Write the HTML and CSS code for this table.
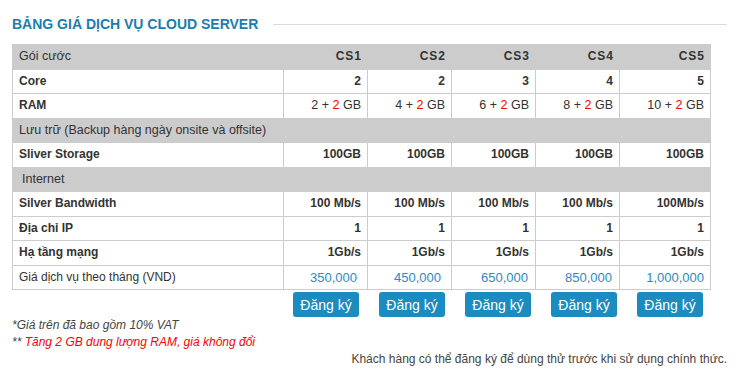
FILE: index.html
```html
<!DOCTYPE html>
<html lang="vi">
<head>
<meta charset="utf-8">
<title>Bảng giá dịch vụ Cloud Server</title>
<link rel="stylesheet" href="styles.css">
</head>
<body>
<div class="page">
  <div class="heading">
    <h2 class="title">BẢNG GIÁ DỊCH VỤ CLOUD SERVER</h2>
    <div class="rule"></div>
  </div>
  <table class="price">
    <colgroup>
      <col class="c-label"><col class="c-plan"><col class="c-plan"><col class="c-plan"><col class="c-plan"><col class="c-last">
    </colgroup>
    <tr class="head">
      <td>Gói cước</td><td class="plan">CS1</td><td class="plan">CS2</td><td class="plan">CS3</td><td class="plan">CS4</td><td class="plan">CS5</td>
    </tr>
    <tr class="b">
      <td>Core</td><td>2</td><td>2</td><td>3</td><td>4</td><td>5</td>
    </tr>
    <tr class="b">
      <td>RAM</td><td class="n">2 + <span class="red">2</span> GB</td><td class="n">4 + <span class="red">2</span> GB</td><td class="n">6 + <span class="red">2</span> GB</td><td class="n">8 + <span class="red">2</span> GB</td><td class="n">10 + <span class="red">2</span> GB</td>
    </tr>
    <tr class="section">
      <td colspan="6">Lưu trữ (Backup hàng ngày onsite và offsite)</td>
    </tr>
    <tr class="b">
      <td>Sliver Storage</td><td>100GB</td><td>100GB</td><td>100GB</td><td>100GB</td><td>100GB</td>
    </tr>
    <tr class="section">
      <td colspan="6" class="indent">Internet</td>
    </tr>
    <tr class="b">
      <td>Silver Bandwidth</td><td>100 Mb/s</td><td>100 Mb/s</td><td>100 Mb/s</td><td>100 Mb/s</td><td>100Mb/s</td>
    </tr>
    <tr class="b">
      <td>Địa chỉ IP</td><td>1</td><td>1</td><td>1</td><td>1</td><td>1</td>
    </tr>
    <tr class="b">
      <td>Hạ tầng mạng</td><td>1Gb/s</td><td>1Gb/s</td><td>1Gb/s</td><td>1Gb/s</td><td>1Gb/s</td>
    </tr>
    <tr class="cost">
      <td>Giá dịch vụ theo tháng (VND)</td><td>350,000</td><td>450,000</td><td>650,000</td><td>850,000</td><td>1,000,000</td>
    </tr>
  </table>
  <div class="actions">
    <a class="btn" href="#">Đăng ký</a>
    <a class="btn" href="#">Đăng ký</a>
    <a class="btn" href="#">Đăng ký</a>
    <a class="btn" href="#">Đăng ký</a>
    <a class="btn" href="#">Đăng ký</a>
  </div>
  <p class="note first">*Giá trên đã bao gồm 10% VAT</p>
  <p class="note">** <span class="red">Tăng 2 GB dung lượng RAM, giá không đổi</span></p>
  <p class="trial">Khách hàng có thể đăng ký để dùng thử trước khi sử dụng chính thức.</p>
</div>
</body>
</html>
```
FILE: styles.css
```css
* { box-sizing: border-box; }
html, body { margin: 0; padding: 0; background: #fff; }
body {
  font-family: "Liberation Sans", Arial, sans-serif;
  font-size: 12px;
  color: #333;
}
.page {
  width: 739px;
  padding: 14px 12px 0 12px;
}
.heading {
  display: flex;
  align-items: center;
  gap: 15px;
  height: 20px;
}
.title {
  margin: 0;
  font-size: 14px;
  font-weight: bold;
  color: #1a7db3;
  white-space: nowrap;
}
.rule {
  flex: 1;
  height: 1px;
  background: #ddd;
}
.price {
  margin-top: 10px;
  width: 698px;
  border-collapse: collapse;
  table-layout: fixed;
}
.c-label { width: 271px; }
.c-plan { width: 84px; }
.c-last { width: 91px; }
.price td {
  border: 1px solid #ccc;
  padding: 3px 6px;
  line-height: 17.5px;
  text-align: right;
  font-weight: bold;
  white-space: nowrap;
}
.price td:first-child { text-align: left; }
.price td.n { font-weight: normal; font-size: 12.5px; }
.price tr.head td {
  background: #ccc;
  font-weight: bold;
}
.price tr.head td:first-child { font-weight: normal; font-size: 12.5px; }
.price td.plan { letter-spacing: 1px; padding-right: 5px; }
.price tr.section td {
  background: #ccc;
  font-weight: normal;
  font-size: 12.5px;
  text-align: left;
}
.price td.indent { padding-left: 9px; }
.price tr.cost td {
  font-weight: normal;
  font-size: 13px;
  color: #2a8bc9;
  padding-right: 7px;
}
.price tr.cost td:nth-child(2),
.price tr.cost td:nth-child(3) { padding-right: 10px; }
.price tr.cost td:first-child { color: #333; font-size: 12px; padding-right: 6px; }
.price tr.cost td:last-child { padding-right: 6px; }
.red { color: #ff0000; }
.actions {
  display: flex;
  gap: 20px;
  margin-top: 2px;
  padding-left: 281px;
}
.btn {
  display: inline-flex;
  align-items: center;
  justify-content: center;
  width: 66px;
  height: 25px;
  background: #1a8cc0;
  color: #fff;
  font-size: 14px;
  text-decoration: none;
  border-radius: 3px;
}
.note {
  margin: 0;
  font-style: italic;
  color: #444;
  line-height: 17px;
}
.note.first { margin-top: 0; }
.note .red { color: #ff0000; }
.trial {
  margin: 0;
  text-align: right;
  color: #444;
  line-height: 17px;
}
```
